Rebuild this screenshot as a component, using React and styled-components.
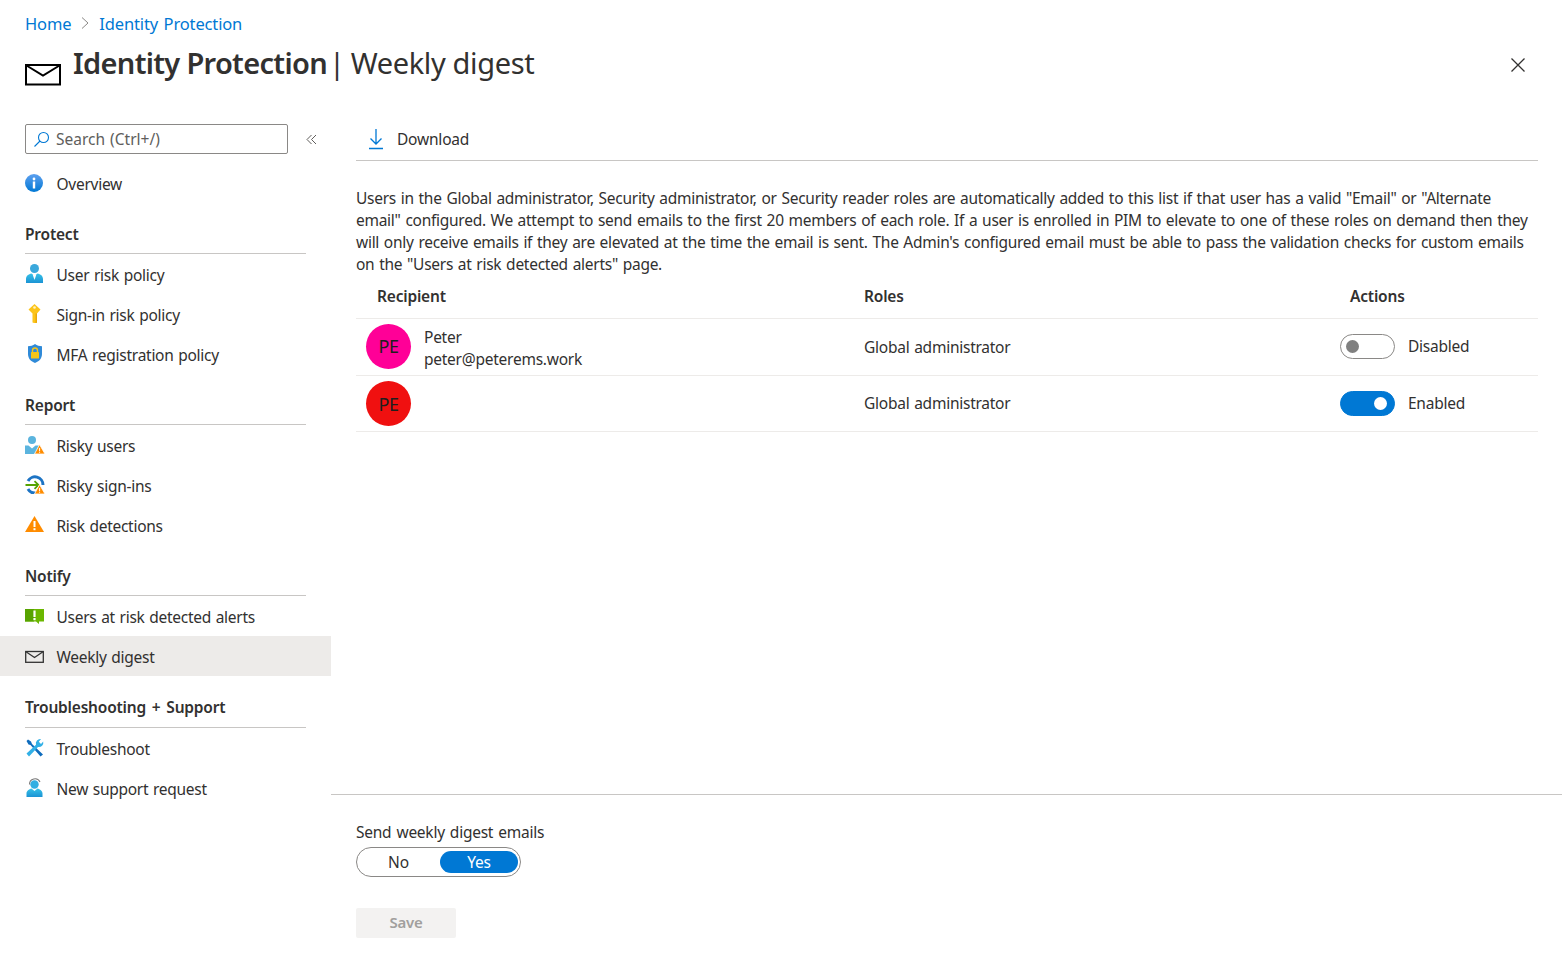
import React from "react";
import styled, { createGlobalStyle } from "styled-components";

const GlobalStyle = createGlobalStyle`
  html, body {
    margin: 0;
    padding: 0;
    background: #fff;
  }
  body {
    font-family: "Noto Sans", "Open Sans", sans-serif;
    font-size: 15px;
    color: #323130;
  }
  * {
    box-sizing: border-box;
  }
`;

const Page = styled.div`
  height: 962px;
  width: 1562px;
  display: flex;
  flex-direction: column;
  overflow: hidden;
`;

const Header = styled.header`
  height: 124px;
  padding: 12px 24px 0 25px;
  flex-shrink: 0;
`;

const Breadcrumb = styled.nav`
  display: flex;
  align-items: center;
  height: 22px;
  font-size: 16.5px;
  letter-spacing: -0.15px;
  word-spacing: 1.5px;
  color: #0078d4;
  gap: 9px;
`;

const TitleRow = styled.div`
  display: flex;
  align-items: flex-start;
  margin-top: 9px;
`;

const TitleIcon = styled.svg`
  width: 36px;
  height: 24px;
  margin-top: 19px;
  margin-right: 12px;
  flex-shrink: 0;
`;

const Title = styled.h1`
  margin: 0;
  font-size: 29px;
  line-height: 40px;
  font-weight: 400;
  letter-spacing: -0.35px;
  color: #323130;
  flex: 1;
  strong {
    font-weight: 600;
    letter-spacing: -0.68px;
  }
`;

const TitleSeparator = styled.span`
  margin: 0 6px 0 2px;
`;

const CloseButton = styled.button`
  border: none;
  background: none;
  padding: 0;
  width: 18px;
  height: 18px;
  margin: 13px 11px 0 0;
  display: flex;
`;

const Body = styled.div`
  flex: 1;
  display: flex;
  min-height: 0;
`;

const Sidebar = styled.aside`
  width: 331px;
  flex-shrink: 0;
`;

const SearchRow = styled.div`
  display: flex;
  align-items: center;
  padding-left: 25px;
  height: 30px;
  margin-bottom: 9px;
`;

const SearchBox = styled.div`
  width: 263px;
  height: 30px;
  border: 1px solid #8a8886;
  border-radius: 2px;
  display: flex;
  align-items: center;
  gap: 6px;
  padding-left: 7px;
  font-size: 15.5px;
  word-spacing: 1px;
  color: #605e5c;
`;

const Collapse = styled.span`
  margin-left: 18px;
  display: flex;
`;

const NavItem = styled.div`
  height: 40px;
  display: flex;
  align-items: center;
  padding: 2px 0 0 25px;
  font-size: 15.5px;
  letter-spacing: -0.27px;
  word-spacing: 0.9px;
  color: #323130;
  background: ${(p) => (p.$active ? "#edebe9" : "transparent")};
`;

const NavIcon = styled.svg`
  width: 20px;
  height: 20px;
  margin: -4px 11.5px 0 0;
  flex-shrink: 0;
`;

const SectionTitle = styled.div`
  height: ${(p) => (p.$tall ? "52px" : "51px")};
  margin: 0 25px;
  padding-top: 19px;
  border-bottom: 1px solid #c8c6c4;
  font-size: 15.5px;
  line-height: 24px;
  letter-spacing: -0.2px;
  word-spacing: 2px;
  font-weight: 600;
  color: #323130;
`;

const Main = styled.main`
  flex: 1;
  display: flex;
  flex-direction: column;
  min-width: 0;
`;

const Content = styled.div`
  flex: 1;
  padding: 0 24px 0 25px;
`;

const Toolbar = styled.div`
  height: 37px;
  display: flex;
  align-items: center;
  gap: 12px;
  padding: 0 0 6px 11px;
  border-bottom: 1px solid #c8c6c4;
  font-size: 15.5px;
  letter-spacing: -0.2px;
`;

const Intro = styled.p`
  margin: 26px 0 0;
  font-size: 15.5px;
  line-height: 22px;
  letter-spacing: -0.27px;
  word-spacing: 1px;
  white-space: nowrap;
`;

const TableRow = styled.div`
  display: grid;
  grid-template-columns: 508px 476px 1fr;
  align-items: center;
  height: ${(p) => p.$height}px;
  padding-bottom: ${(p) => p.$lift || 0}px;
  border-bottom: 1px solid #edebe9;
`;

const HeadCell = styled.div`
  font-weight: 600;
  font-size: 15.5px;
  letter-spacing: -0.2px;
  padding-left: ${(p) => p.$pad || 0}px;
`;

const Recipient = styled.div`
  display: flex;
  align-items: center;
  gap: 13px;
  padding-left: 10px;
`;

const Avatar = styled.div`
  width: 45px;
  height: 45px;
  border-radius: 50%;
  background: ${(p) => p.$color};
  color: #201f1e;
  display: flex;
  align-items: center;
  justify-content: center;
  font-size: 18px;
  letter-spacing: -0.5px;
`;

const Person = styled.div`
  font-size: 15.5px;
  line-height: 22px;
  letter-spacing: -0.25px;
  margin-top: 3px;
`;

const CellText = styled.div`
  font-size: 15.5px;
  letter-spacing: -0.25px;
  word-spacing: 1px;
  margin-top: ${(p) => p.$shift || 0}px;
`;

const ActionCell = styled.div`
  display: flex;
  align-items: center;
  gap: 13px;
  font-size: 15.5px;
  letter-spacing: -0.25px;
`;

const ActionLabel = styled.span`
  margin-top: ${(p) => p.$shift || 0}px;
`;

const Switch = styled.div`
  width: 55px;
  height: 25px;
  border-radius: 13px;
  display: flex;
  align-items: center;
  padding: 0 7px 0 5px;
  justify-content: ${(p) => (p.$on ? "flex-end" : "flex-start")};
  border: 1px solid ${(p) => (p.$on ? "#0078d4" : "#8a8886")};
  background: ${(p) => (p.$on ? "#0078d4" : "#fff")};
`;

const Knob = styled.span`
  width: 13px;
  height: 13px;
  border-radius: 50%;
  background: ${(p) => (p.$on ? "#fff" : "#808080")};
`;

const Footer = styled.footer`
  height: 168px;
  flex-shrink: 0;
  border-top: 1px solid #c8c6c4;
  padding: 26px 0 0 25px;
`;

const FooterLabel = styled.div`
  font-size: 15.5px;
  line-height: 22px;
  letter-spacing: -0.25px;
  word-spacing: 1.3px;
`;

const Segment = styled.div`
  width: 165px;
  height: 30px;
  margin-top: 4px;
  border: 1px solid #8a8886;
  border-radius: 15px;
  padding: 3px;
  display: grid;
  grid-template-columns: 80px 78px;
`;

const SegmentOption = styled.div`
  border-radius: 12px;
  display: flex;
  align-items: center;
  justify-content: center;
  font-size: 15.5px;
  letter-spacing: -0.2px;
  margin-left: ${(p) => (p.$on ? "0" : "-3px")};
  background: ${(p) => (p.$on ? "#0078d4" : "transparent")};
  color: ${(p) => (p.$on ? "#fff" : "#323130")};
`;

const SaveButton = styled.button`
  display: block;
  width: 100px;
  height: 30px;
  margin-top: 31px;
  padding: 0 0 2px;
  border: none;
  border-radius: 2px;
  background: #f3f2f1;
  color: #a19f9d;
  font-family: inherit;
  font-size: 15px;
  font-weight: 600;
  letter-spacing: -0.2px;
`;

const icons = {
  info: (
    <>
      <defs>
        <linearGradient id="infoGrad" x1="0" y1="0" x2="0" y2="1">
          <stop offset="0" stopColor="#5ea0ef" />
          <stop offset="1" stopColor="#0078d4" />
        </linearGradient>
      </defs>
      <circle cx="9" cy="11" r="9" fill="url(#infoGrad)" />
      <circle cx="9" cy="7" r="1.4" fill="#fff" />
      <rect x="7.8" y="9.5" width="2.4" height="7" fill="#fff" />
    </>
  ),
  user: (
    <>
      <defs>
        <linearGradient id="userBody" x1="0" y1="0" x2="0" y2="1">
          <stop offset="0" stopColor="#37c2e8" />
          <stop offset="1" stopColor="#1b93d4" />
        </linearGradient>
      </defs>
      <circle cx="9.5" cy="5.5" r="4.5" fill="#3aa8dc" />
      <path d="M1 20v-4c0-3 2.500-5 5.500-5.500l3 2.500 3-2.500c3 .5 5.500 2.500 5.500 5.500v4z" fill="url(#userBody)" />
      <path d="M7.800 12h3.400l-1.700 5z" fill="#fff" />
    </>
  ),
  key: (
    <>
      <path d="M9.500 1 15.500 6.500 12 10.500v9l-1.500 1-3-1v-9L3.500 6.500z" fill="#fcc419" />
      <path d="M12 10.500v9l-1.500 1v-10z" fill="#e8a70a" />
      <circle cx="9.500" cy="4.500" r="1.300" fill="#fff3bf" />
    </>
  ),
  shield: (
    <>
      <path d="M10 1c2 1.500 4.500 2.200 7 2.200V11c0 4.500-3 7.500-7 9-4-1.500-7-4.500-7-9V3.200C5.500 3.200 8 2.500 10 1z" fill="#2f8ad8" />
      <path d="M7.500 9V7.500a2.500 2.500 0 0 1 5 0V9" fill="none" stroke="#f5c518" strokeWidth="1.400" />
      <rect x="6" y="9" width="8" height="6.500" rx="0.500" fill="#f5c518" />
    </>
  ),
  riskyUser: (
    <>
      <circle cx="7" cy="6" r="4" fill="#5bb4de" />
      <path d="M0 20V11.500h3.500L7 14.500l3.500-3H14V20z" fill="#5bb4de" />
      <path d="M14.500 10.500 20 20h-10.500z" fill="#ff8c00" stroke="#fff" strokeWidth="0.800" />
      <rect x="14.100" y="14" width="1" height="3.200" fill="#fff" />
      <rect x="14.100" y="17.800" width="1" height="1" fill="#fff" />
    </>
  ),
  riskySign: (
    <>
      <path d="M3 7A8 8 0 0 1 18 11" fill="none" stroke="#1d74c4" strokeWidth="3" />
      <path d="M3 15a8 8 0 0 0 8 4" fill="none" stroke="#1d74c4" strokeWidth="3" />
      <path d="M.5 11h13M9.500 7.200l4 3.800-4 3.800" fill="none" stroke="#57a300" strokeWidth="1.800" />
      <path d="M14.500 10.500 20 20H9.500z" fill="#ff8c00" stroke="#fff" strokeWidth="0.800" />
      <rect x="14.100" y="14" width="1" height="3.200" fill="#fff" />
      <rect x="14.100" y="17.800" width="1" height="1" fill="#fff" />
    </>
  ),
  warning: (
    <>
      <path d="M9.500 2 19 18H0z" fill="#ff8c00" />
      <rect x="8.500" y="7" width="2" height="6" fill="#fff" />
      <rect x="8.500" y="14.200" width="2" height="2" fill="#fff" />
    </>
  ),
  alert: (
    <>
      <path d="M0 4h19v12.500h-5V19l-3-2.500H0z" fill="#6bb700" />
      <path d="M0 4h9v12.500H0z" fill="#57a300" />
      <rect x="8.400" y="5.500" width="2.200" height="6.500" fill="#fff" />
      <rect x="8.400" y="13" width="2.200" height="2.200" fill="#fff" />
    </>
  ),
  mail: (
    <>
      <rect x="0.700" y="6.500" width="17.600" height="10.800" fill="none" stroke="#333" strokeWidth="1.300" />
      <path d="M1 6.800 9.500 12.500 18 6.800" fill="none" stroke="#333" strokeWidth="1.300" />
    </>
  ),
  tools: (
    <>
      <path d="M3 2.500 1.500 4 3.500 7.500 5.500 8 15.500 19.500 18 17.500 7 7 6 4.500z" fill="#0f6cbd" />
      <path d="M16 2a4.500 4.500 0 0 0-5 5.700L1.500 16.500 4 19.500 13 10a4.500 4.500 0 0 0 5.200-5.500L16 7 13.800 4.800z" fill="#32b0e6" />
    </>
  ),
  support: (
    <>
      <defs>
        <linearGradient id="supportBody" x1="0" y1="0" x2="0" y2="1">
          <stop offset="0" stopColor="#37c2e8" />
          <stop offset="1" stopColor="#1b93d4" />
        </linearGradient>
      </defs>
      <path d="M4.500 7.500a5.500 5.500 0 0 1 10.500-2.500" fill="none" stroke="#7a7a7a" strokeWidth="1.100" />
      <circle cx="9.500" cy="7.500" r="4.200" fill="#2faee2" />
      <path d="M1.500 20v-3.500c0-2.500 2.500-4.500 5-5l3 2.500 3-2.500c2.500.5 5 2.500 5 5V20z" fill="url(#supportBody)" />
    </>
  ),
};

const sections = [
  {
    title: "Protect",
    items: [
      { label: "User risk policy", icon: "user" },
      { label: "Sign-in risk policy", icon: "key" },
      { label: "MFA registration policy", icon: "shield" },
    ],
  },
  {
    title: "Report",
    items: [
      { label: "Risky users", icon: "riskyUser" },
      { label: "Risky sign-ins", icon: "riskySign" },
      { label: "Risk detections", icon: "warning" },
    ],
  },
  {
    title: "Notify",
    items: [
      { label: "Users at risk detected alerts", icon: "alert" },
      { label: "Weekly digest", icon: "mail", active: true },
    ],
  },
  {
    title: "Troubleshooting + Support",
    tall: true,
    items: [
      { label: "Troubleshoot", icon: "tools" },
      { label: "New support request", icon: "support" },
    ],
  },
];

function Item({ label, icon, active }) {
  return (
    <NavItem $active={active}>
      <NavIcon viewBox="0 0 20 20">{icons[icon]}</NavIcon>
      {label}
    </NavItem>
  );
}

export default function App() {
  return (
    <Page>
      <GlobalStyle />
      <Header>
        <Breadcrumb>
          <span>Home</span>
          <svg width="10" height="14" viewBox="0 0 10 14">
            <path d="M2 1.500 8 7l-6 5.500" fill="none" stroke="#8a8886" strokeWidth="1" />
          </svg>
          <span>Identity Protection</span>
        </Breadcrumb>
        <TitleRow>
          <TitleIcon viewBox="0 0 36 24">
            <rect x="1" y="3" width="34" height="19.500" fill="#fff" stroke="#000" strokeWidth="2" />
            <path d="M1.500 3.500 18 13.500 34.500 3.500" fill="none" stroke="#000" strokeWidth="2" />
          </TitleIcon>
          <Title>
            <strong>Identity Protection</strong>
            <TitleSeparator>|</TitleSeparator>
            Weekly digest
          </Title>
          <CloseButton aria-label="Close">
            <svg width="18" height="18" viewBox="0 0 18 18">
              <path d="M2.500 2.500 15.500 15.500M15.500 2.500 2.500 15.500" fill="none" stroke="#323130" strokeWidth="1.300" />
            </svg>
          </CloseButton>
        </TitleRow>
      </Header>
      <Body>
        <Sidebar>
          <SearchRow>
            <SearchBox>
              <svg width="17" height="17" viewBox="0 0 17 17">
                <circle cx="10.500" cy="6.500" r="5" fill="none" stroke="#0078d4" strokeWidth="1.100" />
                <path d="M7 10 1.500 15.500" fill="none" stroke="#0078d4" strokeWidth="1.100" />
              </svg>
              Search (Ctrl+/)
            </SearchBox>
            <Collapse>
              <svg width="11" height="11" viewBox="0 0 11 11">
                <path d="M5.500 1 1 5.500 5.500 10M10 1 5.500 5.500 10 10" fill="none" stroke="#605e5c" strokeWidth="1" />
              </svg>
            </Collapse>
          </SearchRow>
          <Item label="Overview" icon="info" />
          {sections.map((section) => (
            <div key={section.title}>
              <SectionTitle $tall={section.tall}>{section.title}</SectionTitle>
              {section.items.map((item) => (
                <Item key={item.label} {...item} />
              ))}
            </div>
          ))}
        </Sidebar>
        <Main>
          <Content>
            <Toolbar>
              <svg width="18" height="22" viewBox="0 0 18 22">
                <path d="M9 1v15M3.500 10.500 9 16l5.500-5.500M2 20.500h14" fill="none" stroke="#0078d4" strokeWidth="1.300" />
              </svg>
              Download
            </Toolbar>
            <Intro>
              Users in the Global administrator, Security administrator, or Security reader roles are automatically added to this list if that user has a valid "Email" or "Alternate
              <br />
              email" configured. We attempt to send emails to the first 20 members of each role. If a user is enrolled in PIM to elevate to one of these roles on demand then they
              <br />
              will only receive emails if they are elevated at the time the email is sent. The Admin's configured email must be able to pass the validation checks for custom emails
              <br />
              on the "Users at risk detected alerts" page.
            </Intro>
            <TableRow $height={44} $lift={2}>
              <HeadCell $pad={21}>Recipient</HeadCell>
              <HeadCell>Roles</HeadCell>
              <HeadCell $pad={10}>Actions</HeadCell>
            </TableRow>
            <TableRow $height={57} $lift={2}>
              <Recipient>
                <Avatar $color="#ff0097">PE</Avatar>
                <Person>
                  Peter
                  <br />
                  peter@peterems.work
                </Person>
              </Recipient>
              <CellText $shift={2}>Global administrator</CellText>
              <ActionCell>
                <Switch>
                  <Knob />
                </Switch>
                <ActionLabel>Disabled</ActionLabel>
              </ActionCell>
            </TableRow>
            <TableRow $height={56}>
              <Recipient>
                <Avatar $color="#f01010">PE</Avatar>
              </Recipient>
              <CellText $shift={-2}>Global administrator</CellText>
              <ActionCell>
                <Switch $on>
                  <Knob $on />
                </Switch>
                <ActionLabel $shift={-2}>Enabled</ActionLabel>
              </ActionCell>
            </TableRow>
          </Content>
          <Footer>
            <FooterLabel>Send weekly digest emails</FooterLabel>
            <Segment>
              <SegmentOption>No</SegmentOption>
              <SegmentOption $on>Yes</SegmentOption>
            </Segment>
            <SaveButton disabled>Save</SaveButton>
          </Footer>
        </Main>
      </Body>
    </Page>
  );
}
